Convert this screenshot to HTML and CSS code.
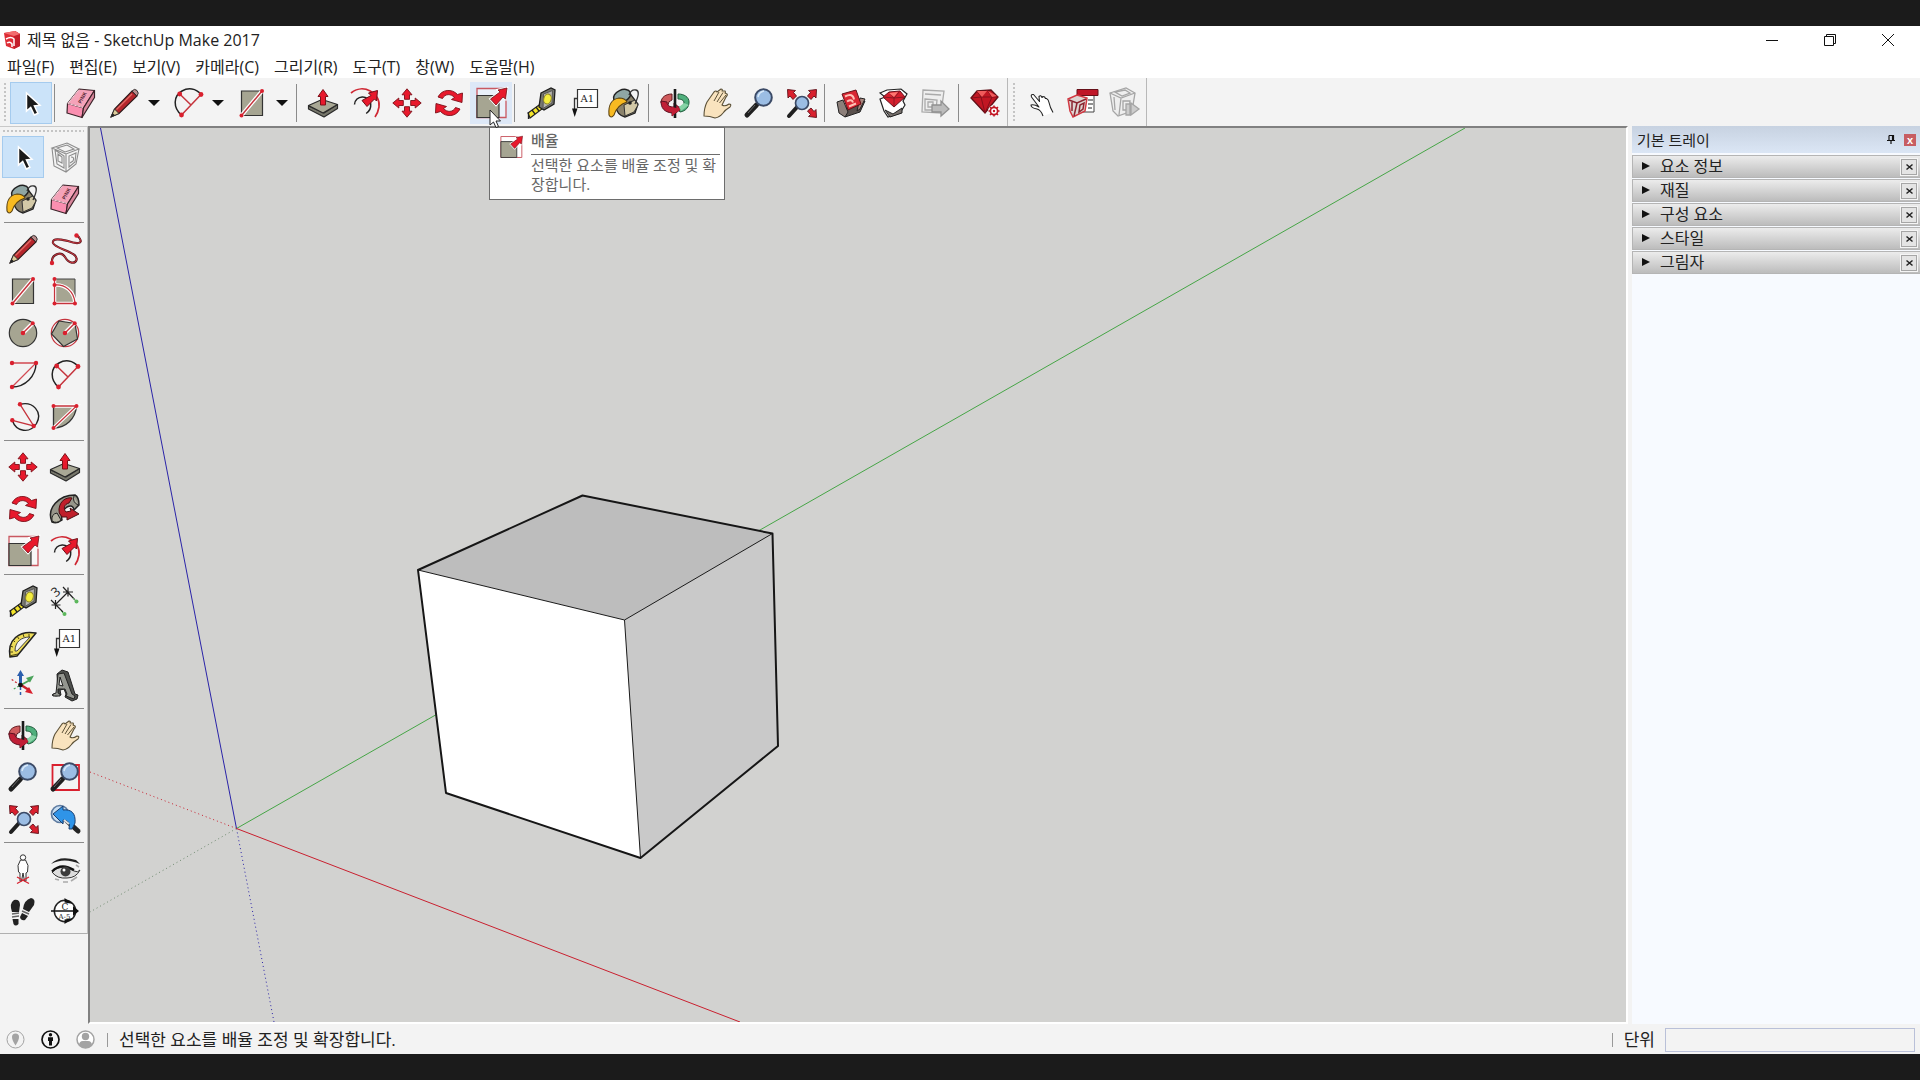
FILE: index.html
```html
<!DOCTYPE html>
<html lang="ko">
<head>
<meta charset="utf-8">
<title>제목 없음 - SketchUp Make 2017</title>
<link rel="stylesheet" href="styles.css">
</head>
<body>
<svg class="sprite" aria-hidden="true">
  <symbol id="cursor" viewBox="0 0 36 36"><path d="M13.500 8V26l4.200-3.600 3.600 7.600 3.600-1.700-3.500-7.400 5.600-.7z" fill="#1a1a1a" stroke="#fff" stroke-width="1.500"/></symbol>
  <symbol id="eraser" viewBox="0 0 36 36"><g stroke="#3b2329" stroke-width="1.200" stroke-linejoin="round"><path d="M16 4l15.500 1.500L20.500 23 4.500 18.500z" fill="#f5a3b9"/><path d="M4.500 18.500l16 4.500-1.500 9.500L4 28z" fill="#fa8fb0"/><path d="M31.500 5.500v7L19 32.500 20.500 23z" fill="#d9879c"/></g><path d="M16 4.500L5 18.500l15 4" fill="none" stroke="#fbd3de"/><text x="0" y="0" transform="translate(18 19) rotate(-62)" font-size="5" font-weight="700" fill="#5c2a38">PINK</text></symbol>
  <symbol id="pencil" viewBox="0 0 36 36"><path d="M5 32l3.500-8L26 6l5 5-18 17.500z" fill="#b5252b" stroke="#2d1b1b" stroke-width="1.100"/><path d="M10.500 24.500L26 9" stroke="#e06a63" stroke-width="1.200"/><path d="M5 32l3.500-8 4.500 4.500z" fill="#dccb9a" stroke="#333" stroke-width="1"/><path d="M5 32l1.500-4 2.500 2.300z" fill="#222"/><path d="M26 6q2.500-3 5-.5t0 5.500z" fill="#b98c8c" stroke="#333"/></symbol>
  <symbol id="freehand" viewBox="0 0 36 36"><path d="M5 32C4 23 14 20 18 26c4 7 10 7 11.500 3C32 21 8 18 6 12c-1-6 10-3 15-2 8 3 15 3 12-2-1-3-2-3-4-3.500" fill="none" stroke="#5b1a20" stroke-width="2.200"/><path d="M5 32C4 23 14 20 18 26c4 7 10 7 11.500 3C32 21 8 18 6 12c-1-6 10-3 15-2 8 3 15 3 12-2-1-3-2-3-4-3.500" fill="none" stroke="#d33a43"/><g fill="#d9202e"><circle cx="5" cy="32" r="2.200"/><circle cx="29.500" cy="4.500" r="2.200"/></g></symbol>
  <symbol id="rect" viewBox="0 0 36 36"><path d="M7.500 6h21v24.500h-21z" fill="#a6a592" stroke="#333" stroke-width="1.200"/><path d="M7.500 30.500L28 6" stroke="#fff" stroke-width="4"/><path d="M7.500 30.500L28 6" stroke="#c5333c" stroke-width="1.500"/><g fill="#d9202e"><circle cx="7.500" cy="30.500" r="2"/><circle cx="28" cy="6" r="2"/></g></symbol>
  <symbol id="rotrect" viewBox="0 0 36 36"><path d="M7.500 6H28v24.500H7.500z" fill="#a6a592" stroke="#444"/><path d="M7.500 6v24.500H28M7.500 12C18 11 27 18 28 30" fill="none" stroke="#fff" stroke-width="3.500"/><path d="M7.500 6v24.500H28M7.500 12C18 11 27 18 28 30" fill="none" stroke="#c5333c" stroke-width="1.300"/><g fill="#d9202e"><circle cx="7.500" cy="6" r="2"/><circle cx="7.500" cy="12" r="2"/><circle cx="7.500" cy="30.500" r="2"/><circle cx="28" cy="30.500" r="2"/></g></symbol>
  <symbol id="circle" viewBox="0 0 36 36"><circle cx="18" cy="18" r="13.700" fill="#a6a592" stroke="#333" stroke-width="1.200"/><path d="M18 18l9.500-9.500" stroke="#fff" stroke-width="4"/><path d="M18 18l9.500-9.500" stroke="#c5333c" stroke-width="1.500"/><g fill="#d9202e"><circle cx="18" cy="18" r="2.300"/><circle cx="27.700" cy="8.300" r="2"/></g></symbol>
  <symbol id="polygon" viewBox="0 0 36 36"><circle cx="18" cy="18" r="13.700" fill="none" stroke="#c5333c" stroke-width="1.200"/><path d="M12 6l16 2.500 2.500 15.500L16.500 31.500 4.500 19z" fill="#a6a592" stroke="#333" stroke-width="1.200"/><path d="M18 18l9.500-9.500" stroke="#fff" stroke-width="4"/><path d="M18 18l9.500-9.500" stroke="#c5333c" stroke-width="1.500"/><g fill="#d9202e"><circle cx="18" cy="18" r="2.300"/><circle cx="27.700" cy="8.300" r="2"/></g></symbol>
  <symbol id="arc2" viewBox="0 0 36 36"><path d="M31 6A24 24 0 0 1 7 30" fill="none" stroke="#222" stroke-width="1.400"/><path d="M7 6h24L7 30" fill="none" stroke="#d24a52" stroke-width="1.300"/><g fill="#d9202e"><circle cx="7" cy="6" r="2.200"/><circle cx="31" cy="6" r="2.200"/><circle cx="7" cy="30" r="2.200"/></g></symbol>
  <symbol id="arc" viewBox="0 0 36 36"><path d="M11.500 30C3 23 3 11 12 6c6-3.500 14-3 19 3.500" fill="none" stroke="#222" stroke-width="1.500"/><path d="M11.500 30L31 9.500M9.700 9L21 20" stroke="#c5333c" stroke-width="1.500"/><g fill="#d9202e"><circle cx="9.700" cy="9" r="2.400"/><circle cx="31" cy="9.500" r="2.400"/><circle cx="11.500" cy="30" r="2.400"/></g></symbol>
  <symbol id="arc3" viewBox="0 0 36 36"><path d="M15 5.300C28 2 38 13 31.500 24.500 25 35 11 33 7.300 21.300" fill="none" stroke="#222" stroke-width="1.400"/><path d="M15 5.300L28.700 27 7.300 21.300" fill="none" stroke="#c5333c" stroke-width="1.300"/><g fill="#d9202e"><circle cx="15" cy="5.300" r="2.200"/><circle cx="7.300" cy="21.300" r="2.200"/><circle cx="28.700" cy="27" r="2.200"/></g></symbol>
  <symbol id="pie" viewBox="0 0 36 36"><path d="M6.500 7H29.500C28.500 20 19 28.500 6.500 29z" fill="#a6a592" stroke="#333" stroke-width="1.300"/><path d="M6.500 7h23l-23 22" fill="none" stroke="#fff" stroke-width="3.500"/><path d="M6.500 7h23l-23 22" fill="none" stroke="#c5333c" stroke-width="1.300"/><g fill="#d9202e"><circle cx="6.500" cy="7" r="2"/><circle cx="29.500" cy="7" r="2"/><circle cx="6.500" cy="29" r="2"/></g></symbol>
  <symbol id="pushpull" viewBox="0 0 36 36"><path d="M3.500 21v3L19 32l13.500-8.500v-4L19 28z" fill="#77776b" stroke="#2a2a2a" stroke-width="1.200" stroke-linejoin="round"/><path d="M3.500 20.500L17 14.500l15.500 5L18 28z" fill="#a9a895" stroke="#2a2a2a" stroke-width="1.200" stroke-linejoin="round"/><path d="M18 4.500l5 7h-2.500V20h-5v-8.500H13z" fill="#e8192c" stroke="#7c1018"/></symbol>
  <symbol id="offset" viewBox="0 0 36 36"><path d="M4 8C16-2 34 8 32 22q-1 6-4 10" fill="none" stroke="#cf2733" stroke-width="1.700"/><path d="M7.500 19.500C8 10 22 9 23.700 19q.5 6-4.500 9.500" fill="none" stroke="#222" stroke-width="1.500"/><path d="M30.500 5.500L21.500 8l2.500 2.500-9 5 5 6 7.500-7.500 2 2z" fill="#e8192c" stroke="#6d1018"/></symbol>
  <symbol id="move" viewBox="0 0 36 36"><g fill="#e8192c" stroke="#7c1018" stroke-width=".9"><path d="M18 3.800l5 6h-2.500v4.500h-5V9.800H13z"/><path d="M18 32.200l5-6h-2.500v-4.500h-5v4.500H13z"/><path d="M3.800 18l6-5v2.500h4.500v5H9.800V23z"/><path d="M32.200 18l-6-5v2.500h-4.500v5h4.500V23z"/></g></symbol>
  <symbol id="rotate" viewBox="0 0 36 36"><g fill="#e8192c" stroke="#7c1018" stroke-width=".9"><path d="M7 12C11 4 21 3.500 26.500 9.500L31.500 8l-.5 9.500-10.500-3 3-2C20 8.500 14 8.500 11.500 13.500z"/><path d="M7 12C11 4 21 3.500 26.500 9.500L31.500 8l-.5 9.500-10.500-3 3-2C20 8.500 14 8.500 11.500 13.500z" transform="rotate(180 18 18)"/></g></symbol>
  <symbol id="followme" viewBox="0 0 36 36"><path d="M5 31C-1 17 12 4 28 4q4 2 4 10l-5 5q-1-6-7-3-7 5-5 13-5 4-10 2z" fill="#97968a" stroke="#222" stroke-width="1.500"/><path d="M5 30q-1-7 5-8l4 7q-4 4-9 1zM27 5q-2 6 4 9" fill="#b5b4a4" stroke="#222"/><path d="M12 18C13 9 20 6 25 7l-3 5c-5 1-6 6-3 9l5-1-1-3 9 6-12 6 0-3-5 0q-4-4-3-8z" fill="#c01f2b" stroke="#4c1015"/></symbol>
  <symbol id="scale" viewBox="0 0 36 36"><path d="M4 3.500h29v29H4z" fill="#fff" fill-opacity=".4" stroke="#c95861" stroke-width="1.300"/><path d="M4 10.500h22v22H4z" fill="#a6a592" stroke="#333" stroke-width="1.200"/><path d="M34 3L25 5l2 2-9.500 7 5.500 6 7-8 2.500 2z" fill="#e8192c" stroke="#fff" stroke-width="2.500"/><path d="M34 3L25 5l2 2-9.500 7 5.500 6 7-8 2.500 2z" fill="#e8192c" stroke="#6d1018" stroke-width=".8"/></symbol>
  <symbol id="tape" viewBox="0 0 36 36"><path d="M5 28l11-8 3 4L7 33z" fill="#f4e52a" stroke="#222" stroke-width="1.200"/><path d="M9 25l3 4m1-7 3 4M5.500 27v7" stroke="#222" stroke-width="1.300"/><path d="M18 8l10-5 4 2-1 14-10 6-5-3z" fill="#77776f" stroke="#1d1d1d" stroke-width="1.300"/><path d="M20.500 9l9-3.500-.5 12.500-9 5.500z" fill="#b5b4ae" stroke="#555"/><ellipse cx="24.500" cy="14" rx="3.700" ry="5" transform="rotate(15 24.500 14)" fill="#f4ed3f" stroke="#938a20"/></symbol>
  <symbol id="dimension" viewBox="0 0 36 36"><path d="M8 22L21 9M4 17l12 12M16 4l12 13M8.500 17v9M4.500 22h9M21 4.500v9M16 9h10" stroke="#222" stroke-width="1.200"/><path d="M14 28l3 3M26 15l3 3" stroke="#59a559"/><g fill="#5cb85c"><circle cx="17.500" cy="31" r="2"/><circle cx="29.500" cy="18.500" r="2"/></g><text x="6" y="13" font-size="13" transform="rotate(-40 10 10)" fill="#222">3</text></symbol>
  <symbol id="protractor" viewBox="0 0 36 36"><path d="M5 32C2 15 14 5 31 8L12 31z" fill="#eddc58" stroke="#222" stroke-width="1.500" stroke-linejoin="round"/><path d="M10 26c0-9 6-14 15-14L12 26z" fill="#f3f3f3" stroke="#444"/><path d="M5 27h3M5 21l3 1m0-7 2 2m2-6 2 3m4-5 1 3m5-3v3M4 31l9-2" stroke="#4e4614" stroke-width="1"/></symbol>
  <symbol id="text" viewBox="0 0 36 36"><path d="M12.500 4.500h20v18h-20z" fill="#fff" stroke="#333" stroke-width="1.200"/><path d="M12.500 13.500H9.500V25" fill="none" stroke="#333" stroke-width="1.300"/><path d="M7 23.500h5.500L9.700 32z" fill="#111"/><text class="serif" x="15.500" y="17" font-size="10" fill="#222">A1</text></symbol>
  <symbol id="axes" viewBox="0 0 36 36"><path d="M15.500 18V8" stroke="#2b5fae" stroke-width="3"/><path d="M12 9l3.500-6L19 9z" fill="#2b5fae"/><path d="M16 18l9-5" stroke="#4aa35a" stroke-width="2"/><path d="M21 11l8-2.500-4 7z" fill="#4aa35a"/><path d="M16 18l8 5" stroke="#c8232d" stroke-width="2.500"/><path d="M20 25l4-5 4 7z" fill="#d9202e"/><path d="M15.500 20v9" stroke="#2b5fae" stroke-width="1.500" stroke-dasharray="3 2"/><path d="M15 18L6 12" stroke="#c8232d" stroke-width="1.200" stroke-dasharray="2 2"/><path d="M14 19l-7 4" stroke="#4aa35a" stroke-width="1.200" stroke-dasharray="2 2"/><circle cx="15.500" cy="18" r="2.300" fill="#111"/></symbol>
  <symbol id="text3d" viewBox="0 0 36 36"><path d="M8 27l3-2L10 7l5-4 6 2 7 22 3 1-1 4-5 2-7-4 1-3-2-5-4 1 1 5-5 1-4-1z" fill="#4e504d" stroke="#222" stroke-linejoin="round"/><path d="M6 27l3-1 2-19 6-1 8 21 3 2-1 3-8-3 1-2-2-5-7 0 0 4 2 1v2l-7 0z" fill="#93958f" stroke="#222"/><path d="M12 18l1-8 3 9z" fill="#e8e8e8" stroke="#222"/></symbol>
  <symbol id="orbit" viewBox="0 0 36 36"><path d="M21 9c6 0 11 3 11 8s-3 9-9 10l-4-5c6 1 8-2 8-4 0-3-3-4-6-4z" fill="#4faf7c" stroke="#1f5b3b"/><path d="M15 9C9 9 4 12 4 18l7 2q0-4 4-5z" fill="#cf5a5c" stroke="#611a1f"/><path d="M4 16c0 7 3 11 11 12v3l9-7-7-6v4c-4 0-7-1-7-5z" fill="#c01f36" stroke="#5d1020"/><path d="M18 4v29" stroke="#1a1a1a" stroke-width="2.600"/><path d="M15 22l9 2-9 7z" fill="#c01f36"/><path d="M22 22l5-4 5 2-8 6z" fill="#87d3a6"/></symbol>
  <symbol id="hand" viewBox="0 0 36 36"><path d="M5 31q0-8 3-14l7-10q2-2 3 0l4-3q2 0 1 2l3 0q1 1 0 2l2 1q1 1-1 3l-4 8q3 2 7-1 3 0 1 3-5 3-7 6-3 4-8 5-5-2-11-2z" fill="#f9e3be" stroke="#5b5037" stroke-width="1.100" stroke-linejoin="round"/><path d="M20 7l-5 9M24 7.500l-6 9.500M27 10l-6.500 8" stroke="#5b5037"/></symbol>
  <symbol id="zoom" viewBox="0 0 36 36"><path d="M15.500 20L6 30" stroke="#1f1f1f" stroke-width="5" stroke-linecap="round"/><path d="M14 20l-7 8" stroke="#666"/><circle cx="22.500" cy="12.500" r="8.300" fill="#9bbde4" stroke="#3b4a66" stroke-width="2"/><path d="M17 12q1-5 6-6" fill="none" stroke="#d7e8f8" stroke-width="1.500"/></symbol>
  <symbol id="zoomwin" viewBox="0 0 36 36"><path d="M5.500 6H32v25H5.500z" fill="none" stroke="#d9202e" stroke-width="1.800"/><use href="#zoom" width="36" height="36"/></symbol>
  <symbol id="extents" viewBox="0 0 36 36"><path d="M15 21l-9 10" stroke="#1f1f1f" stroke-width="4" stroke-linecap="round"/><circle cx="19" cy="18" r="6.500" fill="#9bbde4" stroke="#3b4a66" stroke-width="1.700"/><g fill="#d9202e" stroke="#5d1018" stroke-width=".9"><path d="M4.500 4.500l8 1-2 2 3 3.500-3.500 3.500L7 11l-2 2z"/><path d="M33.500 4.500l-8 1 2 2-3 3.500 3.500 3.500 3-3.500 2 2z"/><path d="M33.500 32.500l-8-1 2-2-3-3.500 3.500-3 3 3.500 2-2z"/></g></symbol>
  <symbol id="previous" viewBox="0 0 36 36"><circle cx="13" cy="13" r="8.500" fill="#c7ddf1" stroke="#5e7ba0" stroke-width="1.700"/><path d="M20 20l11 10" stroke="#242424" stroke-width="5" stroke-linecap="round"/><path d="M6 13L16 5v4c8-1 13 3 12 13l-3 6-3 0q2-9-6-9v4z" fill="#2f94e8" stroke="#1b3e6e"/><path d="M17 19l5 4" stroke="#ddd" stroke-width="2"/></symbol>
  <symbol id="position" viewBox="0 0 36 36"><path d="M15.500 9q-4 5-2 12l1.500 1v8h1.500l1.500-8 1.500 8H21v-8l1.500-1q2-7-2-12z" fill="#fff" stroke="#333"/><circle cx="18" cy="6.500" r="2.700" fill="#fff" stroke="#333"/><path d="M12 26l12 6.500M24 26l-12 6.500" stroke="#d9202e" stroke-width="1.300"/></symbol>
  <symbol id="eye" viewBox="0 0 36 36"><path d="M4 13q8-9 25-4l4 4q-16-7-29 0z" fill="#222"/><path d="M5 21q9-9 22-1 4 2 6-1-4 8-13 8-10 1-15-6z" fill="#ddd" stroke="#333"/><path d="M5 20.500Q14 11 27 19" fill="none" stroke="#111" stroke-width="2.200"/><circle cx="18.500" cy="20.500" r="5" fill="#3b3b3b"/><circle cx="17" cy="19" r="1.500" fill="#fff"/><path d="M8 28l4 1m4 2h5m3-1 6-4M29 14l3 2" stroke="#aaa" stroke-width="1.600"/></symbol>
  <symbol id="walk" viewBox="0 0 36 36"><g fill="#222"><path d="M7 19q-3-9 2-12 6-1 6 5l-1 7z"/><path d="M7.500 26h6v5q-3 3-5 0z"/><path d="M18 16q1-9 8-11 5 1 3 7l-5 7z"/><path d="M17 20l6 3-3 4q-4 1-5-3z"/></g><path d="M7 21l7-1m-7 4 7-1M17 18l7 3" stroke="#666" stroke-width="1.500"/></symbol>
  <symbol id="section" viewBox="0 0 36 36"><circle cx="18" cy="18" r="10.700" fill="#fff" stroke="#222" stroke-width="1.500"/><path d="M4 18h27" stroke="#111" stroke-width="1.500"/><path d="M32 18l-6-5v10zM17.500 5l9 6-9-1.500zM17.500 31l9-6-9 1.500z" fill="#111"/><text class="serif" x="14.500" y="16.500" font-size="9" fill="#222">C</text><text class="serif" x="11.500" y="26" font-size="7" fill="#222">A-5</text></symbol>
  <symbol id="component" viewBox="0 0 36 36"><g fill="none" stroke="#8c8c8c" stroke-width="1.100"><path d="M5 9L20 4l12 6-13 5zM5 9l2 18 12 6 10-8 3-15M19 15v18M8 11l2 14 7 4V17zM22 17l0 11 6-5 1-9zM10 9l10-3 7 4-9 3z"/><path d="M11 15l4 3v6l-4-2zM24 18q4 0 2 4l-3 2"/></g></symbol>
  <symbol id="paint" viewBox="0 0 36 36"><path d="M9 11L21 6l10 13-3 9-10 4q-8-2-9-10z" fill="#8b836c" stroke="#222" stroke-width="1.300"/><path d="M17 20l11-5 3 5-4 7-9 4z" fill="#d3c9a7" stroke="#333"/><ellipse cx="15" cy="11" rx="9" ry="6" transform="rotate(-25 15 11)" fill="#8fa6a4" stroke="#222" stroke-width="1.500"/><path d="M22 10q2-6 7-5t-1 14" fill="none" stroke="#333" stroke-width="1.300"/><path d="M12 13C5 14 1 20 2 30q2 4 5 0 3-10 13-13-2-4-8-4z" fill="#f8ba21" stroke="#5a4212" stroke-width="1.100"/><circle cx="23" cy="18" r="1.800" fill="#222"/></symbol>
  <symbol id="wh-get" viewBox="0 0 36 36"><path d="M5 17l8 6 19-7-5 11-15 5-4-8z" fill="#59504d" stroke="#222"/><path d="M4 17l6-2 5 12-3 5-6-4z" fill="#8c7f7a" stroke="#222"/><path d="M27 13l5 1-5 10-3 2z" fill="#a8857d" stroke="#222"/><path d="M9 9l14-4 5 14-13 6z" fill="#d92632" stroke="#651219"/><path d="M12 11.500q8-4 9 3m-7 2q5-3 6 1m-4 4 7-3" fill="none" stroke="#ffc1b6" stroke-width="2"/></symbol>
  <symbol id="wh-ext" viewBox="0 0 36 36"><path d="M5 8l7-3 14-1 6 5-4 7 2 4-5 8-12 4-4-6-4-12 5-2z" fill="#fff" stroke="#222" stroke-width="1.200"/><path d="M10 25l8 4 9-6v5l-12 4z" fill="#77706c" stroke="#222"/><path d="M8 12l6-5 11-1 5 6-11 10z" fill="#d51f2e" stroke="#64101a"/><path d="M8 12l11 1 11-1M14 7l5 6 6-7M19 13v9" fill="none" stroke="#8c1822"/><path d="M14 8l5 4 4-5z" fill="#ff7670"/></symbol>
  <symbol id="wh-share" viewBox="0 0 36 36"><g fill="#eee" stroke="#aaa" stroke-width="1.300"><path d="M6 5l21 1-3 22-19-1z"/><path d="M8 9l16 1M8 14l12 1-1 10H8zM11 17h5v5h-5z"/><path d="M15 20h9v-4l8 8-8 7v-4h-9z" fill="#bbb" stroke="#909090"/></g></symbol>
  <symbol id="ruby" viewBox="0 0 36 36"><path d="M4 13l6-7 14-1 7 7-13 16z" fill="#c11623" stroke="#5e0e16" stroke-width="1.300"/><path d="M4 13l10-1 17 0M10 6l4 6 6-7 5 7M14 12l4 16 7-16" fill="none" stroke="#850f1a"/><path d="M10 6l5 6 5-6zM21 6l4 6 5-1z" fill="#f05a5b"/><circle cx="27" cy="26" r="6" fill="#f3f3f3"/><circle cx="27" cy="26" r="3.600" fill="#fff" stroke="#c11623" stroke-width="1.700"/><circle cx="27" cy="26" r="1.200" fill="#c11623"/><path d="M27 20.500v2m0 7v2m-5.500-5.500h2m7 0h2m-9.500-4 1.500 1.500m5 5 1.500 1.500m0-8-1.500 1.500m-5 5-1.500 1.500" stroke="#c11623" stroke-width="1.500"/></symbol>
  <symbol id="finger" viewBox="0 0 36 36"><path d="M21 31q-2-6-6-7-6-1-6-4 3-1 8 2L9.500 12q-1-3 2-2.500l6 7-.5-5q2-2 3 1l1-1q2 0 2.500 2l1 0q2 1 2.500 4 1 5 4 10" fill="#fff" stroke="#222" stroke-width="1.100" stroke-linejoin="round"/></symbol>
  <symbol id="report" viewBox="0 0 36 36"><path d="M17 6h13v21H17z" fill="#fff" stroke="#444"/><path d="M13 4.500h21v6H13z" fill="#c01628" stroke="#661019"/><path d="M24 15h5m-5 4h5m-5 4h4" stroke="#222" stroke-width="1.200"/><path d="M4 14l9-4 10 3-2 13-12 6-3-6z" fill="#ded5d2" stroke="#d23842" stroke-width="1.500"/><path d="M5 15l8 3 9-4M13 18l-3 13M8 17l0 9M16 20l-1 7 4-3 1-6z" fill="none" stroke="#8b2530" stroke-width="1.500"/></symbol>
  <symbol id="export" viewBox="0 0 36 36"><g fill="#eee" stroke="#a5a5a5" stroke-width="1.300"><path d="M4 8l16-5 9 5-3 18-14 5-5-5z"/><path d="M4 8l11 5 14-5M15 13l-2 17M8 12l1 13M17 16h7l-1 9h-6zM9 7l10-2 5 3-8 3z" fill="none"/><path d="M20 19h4v11h-4zM25 18l8 6-8 6z" fill="#ccc"/></g></symbol>
</svg>

<main class="window">
  <header class="titlebar">
    <svg class="logo" viewBox="0 0 18 20" aria-hidden="true"><path d="M1 3l11-2 5 3v12l-6 3-8-3z" fill="#dd2c35"/><path d="M12 1l5 3v12l-6 3V6z" fill="#c41f2b"/><path d="M1 3l11-2 5 3-6 2z" fill="#f26d6f"/><path d="M3 9q5-3 8 0v7M4 13q3-2 5 1v3" fill="none" stroke="#fff" stroke-width="1.500"/></svg>
    <h1 class="title">제목 없음 - SketchUp Make 2017</h1>
    <div class="winbuttons">
      <button aria-label="최소화"><svg viewBox="0 0 12 12"><path d="M0 6.500h12"/></svg></button>
      <button aria-label="이전 크기로"><svg viewBox="0 0 12 12"><path d="M.5 2.500h9v9h-9zM2.500 2V.5h9v9H10"/></svg></button>
      <button aria-label="닫기"><svg viewBox="0 0 12 12"><path d="M0 0l12 12M12 0L0 12"/></svg></button>
    </div>
  </header>
  <nav class="menubar" aria-label="메뉴">
    <button>파일(F)</button><button>편집(E)</button><button>보기(V)</button><button>카메라(C)</button><button>그리기(R)</button><button>도구(T)</button><button>창(W)</button><button>도움말(H)</button>
  </nav>

  <div class="toolbars">
    <div class="toolbar" role="toolbar" aria-label="시작하기">
      <button class="tool active" aria-label="선택"><svg><use href="#cursor"/></svg></button>
      <span class="sep"></span>
      <button class="tool" aria-label="지우기"><svg><use href="#eraser"/></svg></button>
      <button class="tool wide" aria-label="선"><svg><use href="#pencil"/></svg></button><button class="drop" aria-label="선 도구"></button>
      <button class="tool wide" aria-label="호"><svg><use href="#arc"/></svg></button><button class="drop" aria-label="호 도구"></button>
      <button class="tool wide" aria-label="직사각형"><svg><use href="#rect"/></svg></button><button class="drop" aria-label="도형 도구"></button>
      <span class="sep"></span>
      <button class="tool" aria-label="밀기/끌기"><svg><use href="#pushpull"/></svg></button>
      <button class="tool" aria-label="오프셋"><svg><use href="#offset"/></svg></button>
      <button class="tool" aria-label="이동"><svg><use href="#move"/></svg></button>
      <button class="tool" aria-label="회전"><svg><use href="#rotate"/></svg></button>
      <div class="tipanchor">
        <button class="tool hover" aria-label="배율" aria-describedby="scale-tip"><svg><use href="#scale"/></svg></button>
        <div class="tooltip" role="tooltip" id="scale-tip">
          <svg><use href="#scale"/></svg>
          <div class="tiptext"><strong>배율</strong><p>선택한 요소를 배율 조정 및 확장합니다.</p></div>
        </div>
        <svg class="pointer" viewBox="0 0 12 20" aria-hidden="true"><path d="M1 1v15l3.500-3 2.500 5.500 2.500-1L7 12h4.500z" fill="#fff" stroke="#222"/></svg>
      </div>
      <span class="sep"></span>
      <button class="tool" aria-label="줄자"><svg><use href="#tape"/></svg></button>
      <button class="tool" aria-label="텍스트"><svg><use href="#text"/></svg></button>
      <button class="tool" aria-label="페인트 버킷"><svg><use href="#paint"/></svg></button>
      <span class="sep"></span>
      <button class="tool" aria-label="궤도"><svg><use href="#orbit"/></svg></button>
      <button class="tool" aria-label="이동 보기"><svg><use href="#hand"/></svg></button>
      <button class="tool" aria-label="확대/축소"><svg><use href="#zoom"/></svg></button>
      <button class="tool" aria-label="범위 확대"><svg><use href="#extents"/></svg></button>
      <span class="sep"></span>
      <button class="tool" aria-label="모델 가져오기"><svg><use href="#wh-get"/></svg></button>
      <button class="tool" aria-label="익스텐션"><svg><use href="#wh-ext"/></svg></button>
      <button class="tool" aria-label="모델 공유"><svg><use href="#wh-share"/></svg></button>
      <span class="sep"></span>
      <button class="tool" aria-label="익스텐션 관리자"><svg><use href="#ruby"/></svg></button>
    </div>
    <div class="toolbar" role="toolbar" aria-label="동적 구성 요소">
      <button class="tool" aria-label="상호 작용"><svg><use href="#finger"/></svg></button>
      <button class="tool" aria-label="구성 요소 옵션"><svg><use href="#report"/></svg></button>
      <button class="tool" aria-label="구성 요소 속성"><svg><use href="#export"/></svg></button>
    </div>
  </div>

  <div class="workspace">
    <aside class="sidebar">
      <div class="palette" role="toolbar" aria-label="큰 도구 모음">
        <div class="group">
          <button class="tool active" aria-label="선택"><svg><use href="#cursor"/></svg></button>
          <button class="tool" aria-label="구성 요소 만들기"><svg><use href="#component"/></svg></button>
          <button class="tool" aria-label="페인트 버킷"><svg><use href="#paint"/></svg></button>
          <button class="tool" aria-label="지우기"><svg><use href="#eraser"/></svg></button>
        </div>
        <div class="group">
          <button class="tool" aria-label="선"><svg><use href="#pencil"/></svg></button>
          <button class="tool" aria-label="자유 곡선"><svg><use href="#freehand"/></svg></button>
          <button class="tool" aria-label="직사각형"><svg><use href="#rect"/></svg></button>
          <button class="tool" aria-label="회전 직사각형"><svg><use href="#rotrect"/></svg></button>
          <button class="tool" aria-label="원"><svg><use href="#circle"/></svg></button>
          <button class="tool" aria-label="다각형"><svg><use href="#polygon"/></svg></button>
          <button class="tool" aria-label="호"><svg><use href="#arc2"/></svg></button>
          <button class="tool" aria-label="2점 호"><svg><use href="#arc"/></svg></button>
          <button class="tool" aria-label="3점 호"><svg><use href="#arc3"/></svg></button>
          <button class="tool" aria-label="파이"><svg><use href="#pie"/></svg></button>
        </div>
        <div class="group">
          <button class="tool" aria-label="이동"><svg><use href="#move"/></svg></button>
          <button class="tool" aria-label="밀기/끌기"><svg><use href="#pushpull"/></svg></button>
          <button class="tool" aria-label="회전"><svg><use href="#rotate"/></svg></button>
          <button class="tool" aria-label="따라가기"><svg><use href="#followme"/></svg></button>
          <button class="tool" aria-label="배율"><svg><use href="#scale"/></svg></button>
          <button class="tool" aria-label="오프셋"><svg><use href="#offset"/></svg></button>
        </div>
        <div class="group">
          <button class="tool" aria-label="줄자"><svg><use href="#tape"/></svg></button>
          <button class="tool" aria-label="치수"><svg><use href="#dimension"/></svg></button>
          <button class="tool" aria-label="각도기"><svg><use href="#protractor"/></svg></button>
          <button class="tool" aria-label="텍스트"><svg><use href="#text"/></svg></button>
          <button class="tool" aria-label="축"><svg><use href="#axes"/></svg></button>
          <button class="tool" aria-label="3D 텍스트"><svg><use href="#text3d"/></svg></button>
        </div>
        <div class="group">
          <button class="tool" aria-label="궤도"><svg><use href="#orbit"/></svg></button>
          <button class="tool" aria-label="이동 보기"><svg><use href="#hand"/></svg></button>
          <button class="tool" aria-label="확대/축소"><svg><use href="#zoom"/></svg></button>
          <button class="tool" aria-label="창 확대"><svg><use href="#zoomwin"/></svg></button>
          <button class="tool" aria-label="범위 확대"><svg><use href="#extents"/></svg></button>
          <button class="tool" aria-label="이전"><svg><use href="#previous"/></svg></button>
        </div>
        <div class="group">
          <button class="tool" aria-label="카메라 배치"><svg><use href="#position"/></svg></button>
          <button class="tool" aria-label="둘러보기"><svg><use href="#eye"/></svg></button>
          <button class="tool" aria-label="걷기"><svg><use href="#walk"/></svg></button>
          <button class="tool" aria-label="단면"><svg><use href="#section"/></svg></button>
        </div>
      </div>
    </aside>

    <section class="viewport" aria-label="모델">
      <svg class="scene" viewBox="90 128 1536 894" preserveAspectRatio="xMinYMin slice">
        <g fill="none" stroke-width="1">
          <path d="M236.500 828.500L100.500 128" stroke="#2a23a8"/>
          <path d="M236.500 828.500L274 1022" stroke="#2a23a8" stroke-dasharray="1 3"/>
          <path d="M236.500 828.500L1465 128" stroke="#46a546"/>
          <path d="M236.500 828.500L90 912" stroke="#6f8a6f" stroke-dasharray="1 3"/>
          <path d="M236.500 828.500L740 1022" stroke="#c9202f"/>
          <path d="M236.500 828.500L90 772" stroke="#c9202f" stroke-dasharray="1 3"/>
        </g>
        <path d="M418 570l164.500-74.500L772.500 533.500 624.500 620z" fill="#bdbdbd"/>
        <path d="M418 570l206.500 50 16 238L446 793z" fill="#fff"/>
        <path d="M624.500 620l148-86.500L778 746 640.500 858z" fill="#c9c9c9"/>
        <path d="M418 570l206.500 50 148-86.500M624.500 620l16 238" fill="none" stroke="#1b1b1b"/>
        <path d="M418 570l164.500-74.500 190 38L778 746 640.500 858 446 793z" fill="none" stroke="#161616" stroke-width="2" stroke-linejoin="round"/>
      </svg>
    </section>

    <aside class="tray">
      <header class="trayhead">
        <h2>기본 트레이</h2>
        <button class="pin" aria-label="자동 숨기기"><svg viewBox="0 0 8 9"><path d="M2 .5h4.500V5M2 .5V5M0 5.500h8M4 6v3M5.500 1v4" fill="none" stroke="#111" stroke-width="1.200"/></svg></button>
        <button class="shut" aria-label="트레이 닫기">x</button>
      </header>
      <div class="panel"><button class="expand">요소 정보</button><button class="x" aria-label="요소 정보 닫기"><svg viewBox="0 0 7 6"><path d="M.5.5l6 5m0-5-6 5"/></svg></button></div>
      <div class="panel"><button class="expand">재질</button><button class="x" aria-label="재질 닫기"><svg viewBox="0 0 7 6"><path d="M.5.5l6 5m0-5-6 5"/></svg></button></div>
      <div class="panel"><button class="expand">구성 요소</button><button class="x" aria-label="구성 요소 닫기"><svg viewBox="0 0 7 6"><path d="M.5.5l6 5m0-5-6 5"/></svg></button></div>
      <div class="panel"><button class="expand">스타일</button><button class="x" aria-label="스타일 닫기"><svg viewBox="0 0 7 6"><path d="M.5.5l6 5m0-5-6 5"/></svg></button></div>
      <div class="panel"><button class="expand">그림자</button><button class="x" aria-label="그림자 닫기"><svg viewBox="0 0 7 6"><path d="M.5.5l6 5m0-5-6 5"/></svg></button></div>
    </aside>
  </div>

  <footer class="statusbar">
    <button class="status" aria-label="위치 정보"><svg viewBox="0 0 19 19"><circle cx="9.500" cy="9.500" r="8.500" fill="none" stroke="#a3a3a3"/><path d="M9.500 15.500Q6 10 6 7a3.500 3.500 0 0 1 7 0q0 3-3.500 8.500z" fill="#a3a3a3"/></svg></button>
    <button class="status" aria-label="크레딧"><svg viewBox="0 0 19 19"><circle cx="9.500" cy="9.500" r="8.500" fill="none" stroke="#111" stroke-width="1.700"/><circle cx="9.500" cy="4.800" r="1.700" fill="#111"/><path d="M7 7.200h5V11h-1v4.500H8V11H7z" fill="#111"/></svg></button>
    <button class="status" aria-label="로그인"><svg viewBox="0 0 19 19"><circle cx="9.500" cy="9.500" r="8.500" fill="#fff" stroke="#a3a3a3" stroke-width="1.500"/><circle cx="9.500" cy="6.500" r="3.700" fill="#a3a3a3"/><path d="M3 15.500Q3 11 7 11h5q4 0 4 4.500-6 5-13 0z" fill="#a3a3a3"/></svg></button>
    <span class="bar"></span>
    <p class="hint">선택한 요소를 배율 조정 및 확장합니다.</p>
    <span class="bar"></span>
    <label for="measure">단위</label>
    <input id="measure" type="text">
  </footer>
</main>
</body>
</html>
```
FILE: styles.css
```css
* { box-sizing: border-box; }

body {
  margin: 0;
  padding: 26px 0;
  min-height: 100vh;
  display: flex;
  background: #1b1b1b;
  color: #222;
  font: 15px/20px "Open Sans", "Noto Sans CJK KR", sans-serif;
}

button {
  margin: 0;
  padding: 0;
  border: 0;
  background: none;
  color: inherit;
  font: inherit;
}

h1, h2, p { margin: 0; font: inherit; }
svg { display: block; overflow: visible; }
.sprite { display: none; }
.serif { font-family: "DejaVu Serif", serif; }

.window {
  flex: 1;
  display: flex;
  flex-direction: column;
  min-width: 0;
  background: #f3f3f3;
}

/* Title and menus */
.titlebar {
  display: flex;
  align-items: center;
  height: 28px;
  padding: 0 3px;
  background: #fff;
}
.logo { width: 18px; height: 20px; }
.title { flex: 1; padding-left: 6px; font-size: 15px; }
.winbuttons { display: flex; align-self: stretch; }
.winbuttons button { width: 58px; display: grid; place-items: center; }
.winbuttons svg { width: 12px; height: 12px; fill: none; stroke: #111; }

.menubar {
  display: flex;
  gap: 15px;
  height: 24px;
  padding: 1px 7px 0;
  align-items: center;
  background: #fff;
  font-size: 16px;
}
.title { font-size: 16px; }

/* Tool buttons */
.toolbars { display: flex; height: 48px; }
.toolbar {
  display: flex;
  align-items: center;
  padding: 1px 1px 0 0;
  border-right: 1px solid #b8b8b8;
}
.toolbar + .toolbar { padding-left: 1px; }
.toolbar::before {
  content: "";
  width: 2px;
  height: 40px;
  margin: 0 4px;
  background: repeating-linear-gradient(#c4c4c4 0 2px, transparent 2px 4px);
}
.toolbar .sep {
  width: 8px;
  height: 38px;
  background: linear-gradient(#8b8b8b, #8b8b8b) 2px 0 / 1px 100% no-repeat;
}
.tool {
  width: 42px;
  height: 42px;
  display: grid;
  place-items: center;
}
.tool svg { width: 36px; height: 36px; }
.tool.wide { width: 44px; }
.tool.active { background: #cbe3f9; border: 1px solid #a5cbee; }
.tool.hover { background: #dde8f7; }
.drop { width: 20px; height: 42px; padding-left: 2px; }
.drop::before {
  content: "";
  display: block;
  width: 0;
  border: 6px solid transparent;
  border-top-color: #111;
  border-bottom: 0;
}

.tipanchor { position: relative; }
.tooltip {
  position: absolute;
  z-index: 1;
  left: 19px;
  top: 45px;
  width: 236px;
  display: flex;
  gap: 7px;
  padding: 2px 4px 5px 8px;
  border: 1px solid #6d6d6d;
  background: #fff;
  color: #666;
}
.tooltip > svg { flex: none; width: 26px; height: 26px; margin-top: 4px; }
.tooltip strong {
  display: block;
  height: 25px;
  border-bottom: 1px solid #6d6d6d;
  font-weight: 500;
}
.tiptext { flex: 1; }
.tooltip p { padding-top: 1px; line-height: 19px; }
.pointer {
  position: absolute;
  z-index: 2;
  left: 19px;
  top: 27px;
  width: 12px;
  height: 20px;
}

/* Work area */
.workspace { flex: 1; display: flex; min-height: 0; }
.sidebar { flex: none; width: 88px; }
.palette {
  padding: 2px 0 1px 2px;
  border-top: 1px solid #c9c9c9;
  border-right: 1px solid #c0c0c0;
  border-bottom: 1px solid #b0b0b0;
}
.palette::before {
  content: "";
  display: block;
  height: 2px;
  margin: 1px 3px 4px 1px;
  background: repeating-linear-gradient(90deg, #c4c4c4 0 2px, transparent 2px 4px);
}
.group { display: grid; grid-template-columns: 42px 42px; }
.group + .group {
  padding-top: 8px;
  background: linear-gradient(#8b8b8b, #8b8b8b) 2px 2px / 80px 1px no-repeat;
}

.viewport {
  flex: 1;
  min-width: 0;
  position: relative;
  overflow: hidden;
  margin-right: 4px;
  border: 2px solid;
  border-color: #808080 #fff #fff #808080;
  background: #d2d2d0;
}
.scene { position: absolute; inset: 0; width: 100%; height: 100%; }

.tray { flex: none; width: 288px; background: #f7faff; }
.trayhead {
  display: flex;
  align-items: center;
  height: 27px;
  margin-bottom: 2px;
  padding: 0 4px 0 5px;
  background: linear-gradient(#c7d2e1, #dbe6f5);
}
.trayhead h2 { flex: 1; }
.pin { width: 8px; margin-right: 9px; }
.pin svg { width: 8px; height: 9px; }
.shut {
  width: 12px;
  height: 12px;
  background: #c75d62;
  color: #fff;
  font: 700 11px/10px "Liberation Sans", sans-serif;
}
.panel {
  display: flex;
  align-items: center;
  height: 23px;
  margin-bottom: 1px;
  padding: 0 3px 0 9px;
  border: 1px solid #b5b5b5;
  border-right: 0;
  background: linear-gradient(#ececec, #bcbcbc);
}
.expand {
  flex: 1;
  display: flex;
  align-items: center;
  gap: 10px;
  padding-bottom: 1px;
  font-size: 16px;
  text-align: left;
}
.expand::before {
  content: "";
  border: 4px solid transparent;
  border-left: 8px solid #111;
  border-right: 0;
}
.x {
  width: 16px;
  height: 16px;
  display: grid;
  place-items: center;
  border: 1px solid #a6a6a6;
  outline: 1px solid #f5f5f5;
  background: #e4e4e4;
}
.x svg { width: 7px; height: 6px; fill: none; stroke: #222; stroke-width: 1.500; }

/* Status bar */
.statusbar {
  display: flex;
  align-items: center;
  height: 30px;
  padding: 1px 5px 0 6px;
  font-size: 17px;
}
.status { width: 19px; margin-right: 16px; }
.status svg { width: 19px; height: 19px; }
.statusbar .bar { width: 1px; height: 14px; margin-right: 11px; background: #999; }
.status + .bar { margin-left: -4px; }
.hint { flex: 1; }
.statusbar label { margin-right: 10px; }
.statusbar input {
  width: 250px;
  height: 24px;
  border: 1px solid #b9c0d8;
  background: #f3f3f3;
  font: inherit;
}
```
